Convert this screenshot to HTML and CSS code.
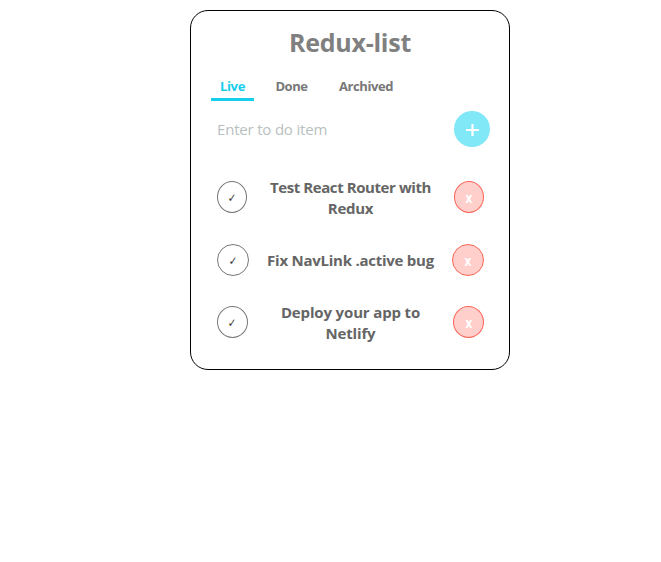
FILE: index.html
```html
<!DOCTYPE html>
<html lang="en">
<head>
<meta charset="utf-8">
<title>Redux-list</title>
<link rel="stylesheet" href="styles.css">
</head>
<body>
<main class="card">
  <h1 class="title"><span>Redux-list</span></h1>
  <nav class="tabs">
    <a class="tab active"><span>Live</span></a>
    <a class="tab done"><span>Done</span></a>
    <a class="tab archived"><span>Archived</span></a>
  </nav>
  <form class="entry">
    <span class="placeholder">Enter to do item</span>
    <button class="add" type="button" aria-label="Add"><svg width="14" height="14" viewBox="0 0 14 14"><path d="M7.5 2v12M1 8h13" stroke="#fff" stroke-width="2.2"/></svg></button>
  </form>
  <ul class="list">
    <li class="item first"><button class="check"><span>✓</span></button><p class="text"><span class="l1">Test React Router with</span><span class="l2">Redux</span></p><button class="remove"><span>x</span></button></li>
    <li class="item second"><button class="check"><span>✓</span></button><p class="text"><span class="l3">Fix NavLink .active bug</span></p><button class="remove"><span>x</span></button></li>
    <li class="item third"><button class="check"><span>✓</span></button><p class="text"><span class="l4">Deploy your app to</span><span class="l5">Netlify</span></p><button class="remove"><span>x</span></button></li>
  </ul>
</main>
</body>
</html>
```
FILE: styles.css
```css
* { box-sizing: border-box; }
body { margin: 0; background: #fff; font-family: "Open Sans", "Noto Sans", sans-serif; }
.card { width: 320px; height: 360px; margin: 10px 0 0 190px; border: 1px solid #000; border-radius: 18px; }
.title { margin: 13px 0 0; height: 36px; line-height: 36px; text-align: center; font-size: 25px; font-weight: 700; letter-spacing: -.25px; color: #808080; }
.tabs { display: flex; height: 28px; margin: 14px 0 0 20px; font-size: 13px; font-weight: 700; letter-spacing: -.42px; color: #777; }
.tab { height: 27px; line-height: 25px; text-align: center; white-space: nowrap; }
.active { width: 43px; letter-spacing: -.3px; color: #15cdec; border-bottom: 3px solid #15cdec; }
.done { width: 33px; margin-left: 21px; }
.archived { width: 54px; margin-left: 31px; }
.entry { display: flex; justify-content: space-between; margin: 9px 19px 0 26px; height: 36px; }
.placeholder { line-height: 36px; font-size: 15px; letter-spacing: -.19px; color: #b8bfbf; }
.add { display: grid; place-items: center; width: 36px; height: 36px; padding: 0; border: 0; border-radius: 50%; background: #80e8f7; }
.list { margin: 30px 0 0; padding: 0; list-style: none; }
.item { display: flex; justify-content: space-between; align-items: center; height: 42px; padding: 0 25px 0 26px; margin-bottom: 20px; }
.check, .remove { width: 31px; height: 32px; padding: 0; border: 1px solid #777; border-radius: 50%; background: #fff; font: 12px "DejaVu Sans", sans-serif; }
.check { color: #333; }
.check span { display: inline-block; transform: translateY(1px) scaleX(.85); }
.remove { border-color: #ff6557; background: #ffcfcc; color: #fff; font: 700 13px "Open Sans", sans-serif; }
.remove span { display: inline-block; transform: scale(.9, 1.15); }
.first { align-items: flex-start; padding-top: 4px; }
.first .text { margin-top: -4px; }
.first .check, .first .remove { width: 30px; }
.second .check, .second .remove { width: 32px; }
.text { margin: 0; text-align: center; color: #656565; font-size: 15px; font-weight: 700; line-height: 21px; white-space: nowrap; }
.text span { display: block; }
.l1 { letter-spacing: -.42px; }
.l2 { letter-spacing: -.3px; }
.l3 { letter-spacing: -.25px; }
.l4 { letter-spacing: -.15px; }
.l5 { letter-spacing: -.15px; }
.third .text { padding-top: 1px; }
```
